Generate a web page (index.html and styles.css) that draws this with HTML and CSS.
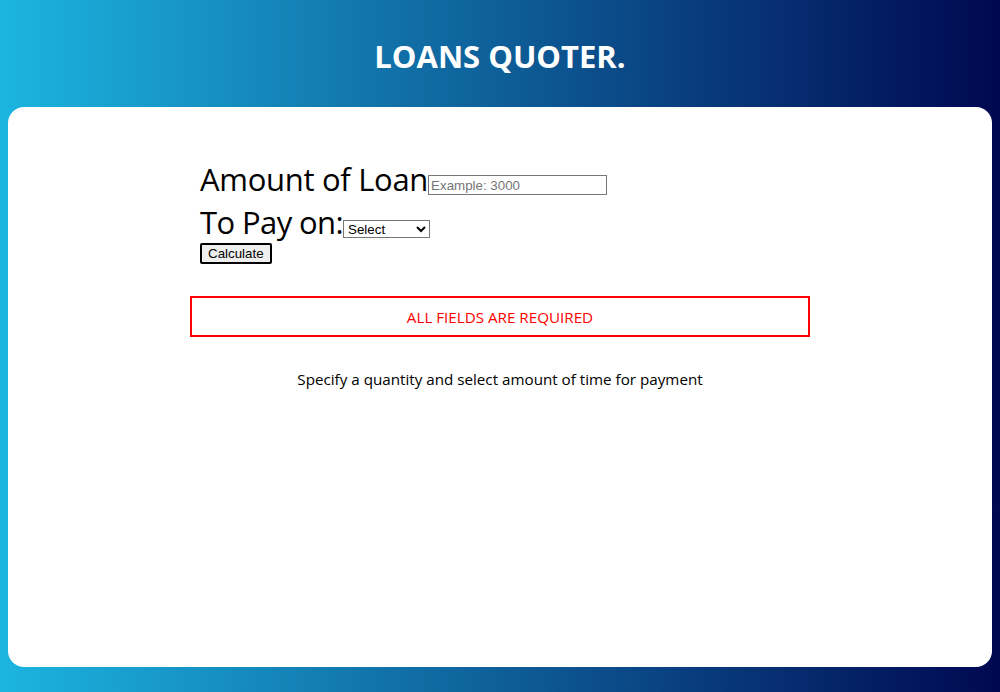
FILE: index.html
```html
<!DOCTYPE html>
<html>
<head>
<meta charset="utf-8">
<link rel="stylesheet" href="styles.css">
</head>
<body>
<header class="top">
  <h1 class="title">LOANS QUOTER.</h1>
</header>
<main class="card">
  <div class="wrap">
    <form class="form">
      <div class="row">
        <label class="lbl">Amount of Loan</label><input class="inp" type="text" placeholder="Example: 3000">
      </div>
      <div class="row">
        <label class="lbl lbl-short">To Pay on:</label><select class="sel"><option>Select</option><option>3 months</option><option>6 months</option><option>12 months</option></select>
      </div>
      <button class="btn" type="button">Calculate</button>
    </form>
    <div class="error">ALL FIELDS ARE REQUIRED</div>
    <p class="hint">Specify a quantity and select amount of time for payment</p>
  </div>
</main>
</body>
</html>
```
FILE: styles.css
```css
html, body { margin: 0; height: 100%; }
body {
  background: linear-gradient(to right, #1cb5e0, #000851);
  font-family: "Open Sans", "Noto Sans", sans-serif;
  display: flex;
  flex-direction: column;
  height: 692px;
  overflow: hidden;
}
.top {
  height: 107px;
  padding-top: 4px;
  box-sizing: border-box;
  display: flex;
  align-items: center;
  justify-content: center;
}
.title {
  margin: 0;
  color: #fff;
  font-size: 31px;
  font-weight: 700;
  letter-spacing: 0;
}
.card {
  margin: 0 8px;
  height: 560px;
  background: #fff;
  border-radius: 16px;
}
.wrap {
  width: 620px;
  margin: 0 auto;
  padding-top: 51px;
}
.form { padding: 0 10px; }
.row { display: flex; align-items: flex-end; }
.lbl {
  font-size: 31px;
  line-height: 43px;
  letter-spacing: -0.3px;
  color: #000;
}
.lbl-short { letter-spacing: -0.6px; }
.inp {
  font-family: "Liberation Sans", Arial, sans-serif;
  font-size: 13.33px;
  width: 173px;
  height: 16px;
  padding: 1px 2px;
  border: 1px solid #767676;
  margin-bottom: 6px;
}
.inp::placeholder { color: #757575; }
.sel {
  font-family: "Liberation Sans", Arial, sans-serif;
  font-size: 13.33px;
  width: 87px;
  height: 18px;
  margin-bottom: 6px;
  border: 1px solid #767676;
  background: #fff;
  padding: 0;
}
.btn {
  font-family: "Liberation Sans", Arial, sans-serif;
  font-size: 13.33px;
  display: block;
  margin-top: -1px;
  padding: 1px 6px;
  border: 2px solid #000;
  border-radius: 2px;
  background: #efefef;
  height: 21px;
}
.error {
  margin-top: 32px;
  border: 2px solid red;
  color: red;
  text-align: center;
  font-size: 15.2px;
  height: 37px;
  line-height: 39px;
}
.hint {
  margin: 32px 0 0;
  text-align: center;
  font-size: 15.2px;
  color: #000;
}
```
